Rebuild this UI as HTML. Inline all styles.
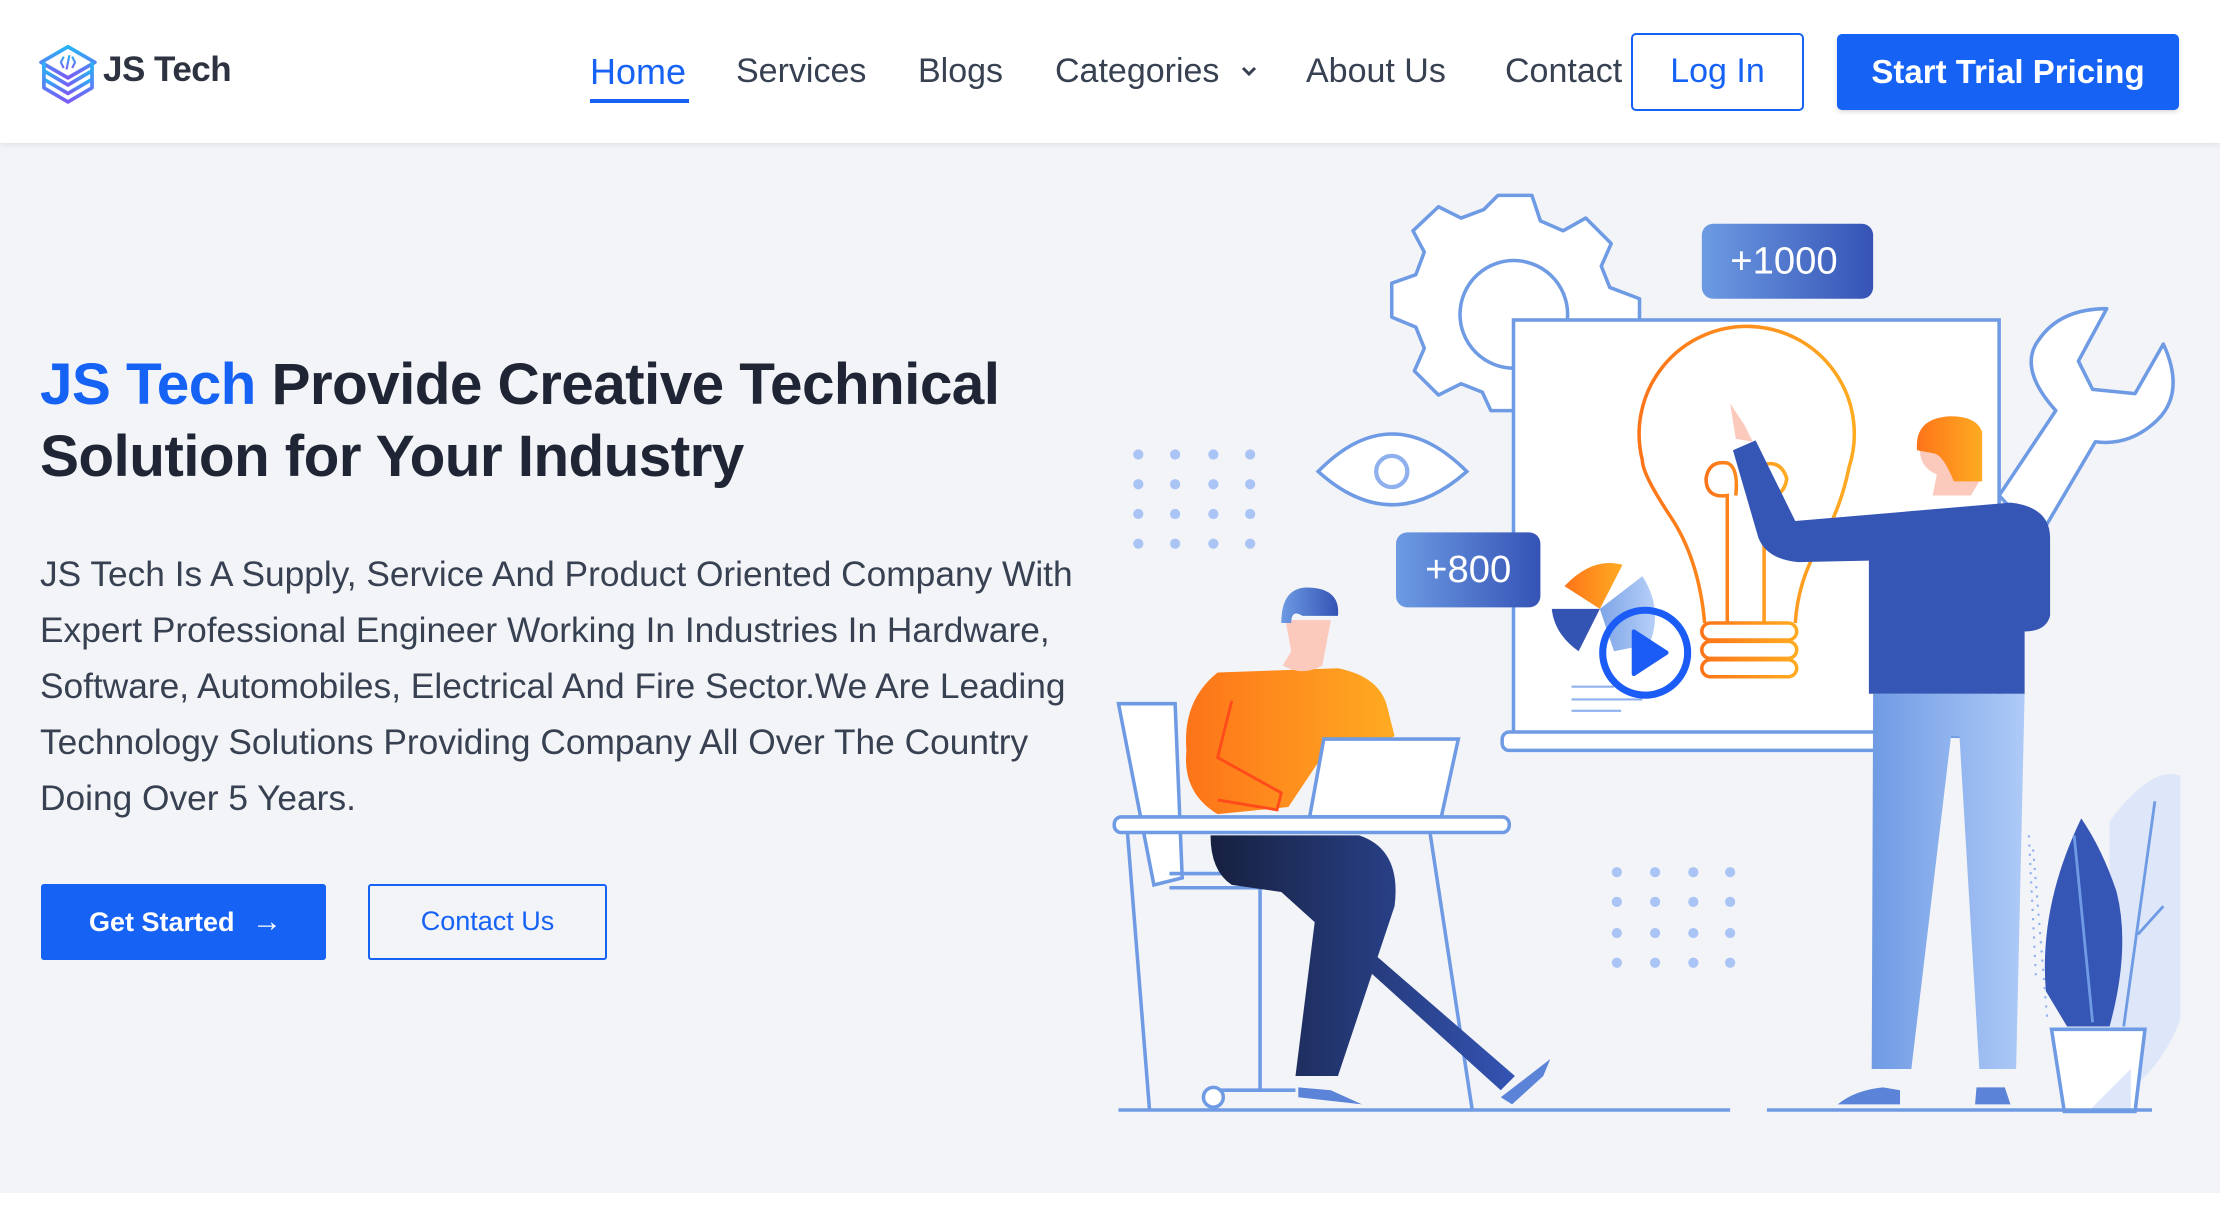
<!DOCTYPE html>
<html><head><meta charset="utf-8"><style>
*{margin:0;padding:0;box-sizing:border-box}
html,body{width:2220px;height:1210px;overflow:hidden;background:#fff;font-family:"Liberation Sans",sans-serif}
.hero{position:absolute;left:0;top:143px;width:2220px;height:1050px;background:#f3f4f8}
.hdr{position:absolute;left:0;top:0;width:2220px;height:143px;background:#fff;box-shadow:0 2px 6px rgba(0,0,0,.08)}
.abs{position:absolute;white-space:nowrap}
.nav{font-size:34px;color:#374151;top:52px}
svg.ill{position:absolute;left:0;top:0;width:2220px;height:1210px}
</style></head><body>
<div class="hero"></div>
<div class="hdr"></div>
<svg class="ill" viewBox="0 0 1568 854.6" xmlns="http://www.w3.org/2000/svg">
<defs>
<linearGradient id="bx" x1="0" x2="1"><stop offset="0" stop-color="#6d9be3"/><stop offset="1" stop-color="#3553b5"/></linearGradient>
<linearGradient id="or" x1="0" x2="1"><stop offset="0" stop-color="#fd7419"/><stop offset="1" stop-color="#ffab22"/></linearGradient>
<linearGradient id="lg" x1="0" x2="1"><stop offset="0" stop-color="#6f9be4"/><stop offset="1" stop-color="#aecaf7"/></linearGradient>
<linearGradient id="dk" x1="0" x2="1"><stop offset="0" stop-color="#16203f"/><stop offset="1" stop-color="#3454b3"/></linearGradient>
<linearGradient id="lo" x1="0" y1="0" x2="0" y2="1"><stop offset="0" stop-color="#25b5f5"/><stop offset="1" stop-color="#7a5cf5"/></linearGradient>
</defs>
<g fill="none" stroke="url(#lo)" stroke-width="2.6" stroke-linejoin="round">
<path d="M48 33 L67 44 L48 55 L29 44 Z"/>
<path d="M31 50 L48 60 L65 50"/><path d="M31 56 L48 66 L65 56"/><path d="M31 44 L31 62 L48 72 L65 62 L65 44"/>
<path d="M45 40 l-2 4 l2 4 M51 40 l2 4 l-2 4 M49 39 l-2 10" stroke-width="1.5"/>
</g>
<path d="M1058 138 L1082 138 L1088 156 L1104 163 L1120 154 L1138 172 L1131 188 L1137 203 L1158 211 L1158 232 L1070 232 L1070 290 L1053 290 L1047 277 L1032 271 L1016 279 L999 262 L1006 246 L1000 231 L983 224 L983 200 L1000 194 L1006 178 L998 163 L1016 146 L1032 154 L1048 148 Z" fill="#fff" stroke="#6f9be4" stroke-width="2.5" stroke-linejoin="round"/>
<path d="M1070 260 A38 38 0 1 1 1107 226" fill="none" stroke="#6f9be4" stroke-width="2.5"/>
<path d="M1412 350 L1452 290 Q1425 260 1440 240 Q1455 218 1488 218 L1468 255 L1478 275 L1508 278 L1528 243 Q1545 280 1520 300 Q1502 315 1480 312 L1440 380 Z" fill="#fff" stroke="#6f9be4" stroke-width="2.5" stroke-linejoin="round"/>
<rect x="1069" y="226" width="343" height="294" fill="#fff" stroke="#6f9be4" stroke-width="2.5"/>
<rect x="1061" y="517" width="270" height="13" rx="5" fill="#fff" stroke="#6f9be4" stroke-width="2.5"/>
<path d="M1204 440 Q1200 395 1180 365 Q1160 335 1160 325 A76 76 0 1 1 1306 330 Q1300 360 1285 385 Q1270 410 1268 440" fill="none" stroke="url(#or)" stroke-width="2.5"/>
<path d="M1220 440 L1220 350 Q1205 352 1205 338 Q1207 325 1220 327 Q1228 330 1226 350 M1246 440 L1246 350 Q1260 352 1262 338 Q1258 325 1246 328 Q1240 332 1246 350" fill="none" stroke="url(#or)" stroke-width="2.5"/>
<g fill="#fff" stroke="url(#or)" stroke-width="2.5"><rect x="1202" y="440" width="67" height="12" rx="6"/><rect x="1202" y="453" width="67" height="12" rx="6"/><rect x="1202" y="466" width="67" height="12" rx="6"/></g>
<path d="M1105 414 Q1125 393 1146 399 L1130 430 Z" fill="url(#or)"/>
<path d="M1096 430 L1130 430 L1115 460 Q1098 448 1096 430 Z" fill="#3454b3"/>
<path d="M1130 430 L1160 407 Q1175 430 1165 455 L1140 460 Z" fill="url(#lg)" opacity=".9"/>
<path d="M1110 485 h30 M1110 494 h50 M1110 502 h35" stroke="#8fb0ee" stroke-width="1.5"/>
<circle cx="1162" cy="461" r="30" fill="none" stroke="#1a5cf5" stroke-width="5"/>
<path d="M1154 446 L1177 461 L1154 476 Z" fill="#1a5cf5" stroke="#1a5cf5" stroke-width="3" stroke-linejoin="round"/>
<rect x="1202" y="158" width="121" height="53" rx="8" fill="url(#bx)"/>
<text x="1260" y="193" font-size="27" fill="#fff" text-anchor="middle" font-family="Liberation Sans">+1000</text>
<rect x="986" y="376" width="102" height="53" rx="8" fill="url(#bx)"/>
<text x="1037" y="411" font-size="27" fill="#fff" text-anchor="middle" font-family="Liberation Sans">+800</text>
<path d="M931 333 Q983 280 1036 333 Q983 380 931 333 Z" fill="#fff" stroke="#6f9be4" stroke-width="2.5"/>
<circle cx="983" cy="333" r="11" fill="none" stroke="#8fb0ee" stroke-width="3"/>
<g fill="#a9c4f5">
<circle cx="804" cy="321" r="3.6"/><circle cx="830" cy="321" r="3.6"/><circle cx="857" cy="321" r="3.6"/><circle cx="883" cy="321" r="3.6"/>
<circle cx="804" cy="342" r="3.6"/><circle cx="830" cy="342" r="3.6"/><circle cx="857" cy="342" r="3.6"/><circle cx="883" cy="342" r="3.6"/>
<circle cx="804" cy="363" r="3.6"/><circle cx="830" cy="363" r="3.6"/><circle cx="857" cy="363" r="3.6"/><circle cx="883" cy="363" r="3.6"/>
<circle cx="804" cy="384" r="3.6"/><circle cx="830" cy="384" r="3.6"/><circle cx="857" cy="384" r="3.6"/><circle cx="883" cy="384" r="3.6"/>
<circle cx="1142" cy="616" r="3.6"/><circle cx="1169" cy="616" r="3.6"/><circle cx="1196" cy="616" r="3.6"/><circle cx="1222" cy="616" r="3.6"/>
<circle cx="1142" cy="637" r="3.6"/><circle cx="1169" cy="637" r="3.6"/><circle cx="1196" cy="637" r="3.6"/><circle cx="1222" cy="637" r="3.6"/>
<circle cx="1142" cy="659" r="3.6"/><circle cx="1169" cy="659" r="3.6"/><circle cx="1196" cy="659" r="3.6"/><circle cx="1222" cy="659" r="3.6"/>
<circle cx="1142" cy="680" r="3.6"/><circle cx="1169" cy="680" r="3.6"/><circle cx="1196" cy="680" r="3.6"/><circle cx="1222" cy="680" r="3.6"/>
</g>
<path d="M1323 490 L1430 490 L1424 755 L1398 755 L1384 520 L1378 520 L1350 755 L1322 755 Z" fill="url(#lg)"/>
<path d="M1298 780 Q1310 770 1330 768 L1342 770 L1342 780 Z M1395 780 L1396 768 L1416 768 L1420 780 Z" fill="#5b84d8"/>
<path d="M1320 490 L1320 396 L1270 397 Q1248 395 1242 380 L1224 318 L1240 311 L1268 368 L1420 355 Q1448 358 1448 380 L1448 435 Q1445 446 1430 446 L1430 490 Z" fill="#3556b5"/>
<path d="M1226 310 L1222 285 L1232 300 L1238 312 Z" fill="#fcc9bd"/>
<path d="M1365 350 L1368 335 Q1355 330 1356 315 L1398 310 L1398 340 L1392 350 Z" fill="#fcc9bd"/>
<path d="M1354 318 Q1352 295 1378 294 Q1396 294 1400 305 L1400 340 L1380 340 Q1372 320 1365 320 Z" fill="url(#or)"/>
<path d="M790 497 L830 497 L835 620 L815 625 Z" fill="#fff" stroke="#6f9be4" stroke-width="2.5"/>
<path d="M796 584 L812 785 M1010 588 L1040 785 M890 627 L890 770 M826 617 L935 617 L935 627 L826 627" fill="none" stroke="#6f9be4" stroke-width="2.5"/>
<path d="M852 770 L915 770" stroke="#6f9be4" stroke-width="2.5"/><circle cx="857" cy="775" r="7" fill="#fff" stroke="#6f9be4" stroke-width="2.5"/>
<path d="M838 530 Q835 495 860 475 L945 472 Q975 478 980 500 L985 520 L930 540 L910 570 L860 575 Q835 560 838 530 Z" fill="url(#or)"/>
<path d="M870 495 L860 535 L905 560 L902 572 L860 565" fill="none" stroke="#ff4a1a" stroke-width="2"/>
<path d="M908 438 L912 460 L906 470 Q920 478 934 470 L940 438 Z" fill="#fcc9bd"/>
<path d="M905 440 Q905 414 925 415 Q947 416 945 435 L920 435 Q912 430 912 440 Z" fill="url(#bx)"/>
<path d="M855 590 L960 590 Q990 600 985 640 L945 760 L915 760 L930 640 L920 630 L1070 760 L1060 770 L905 630 L870 625 Q855 615 855 590 Z" fill="url(#dk)"/>
<path d="M917 775 L917 768 L940 770 L962 780 Z M1060 775 L1095 748 L1090 760 L1068 780 Z" fill="#5b84d8"/>
<path d="M935 522 L1030 522 L1018 577 L925 577 Z" fill="#fff" stroke="#6f9be4" stroke-width="2.5"/>
<rect x="787" y="577" width="279" height="11" rx="5" fill="#fff" stroke="#6f9be4" stroke-width="2.5"/>
<path d="M1490 580 Q1520 540 1540 548 L1540 720 Q1525 760 1490 780 Z" fill="#dde7f9"/>
<path d="M1470 578 Q1440 640 1445 700 L1460 725 L1490 725 Q1505 670 1495 630 Q1485 600 1470 578 Z" fill="#3556b5"/>
<path d="M1465 590 L1478 722 M1500 725 L1522 566 M1510 660 L1528 640" stroke="#6f9be4" stroke-width="2" fill="none"/>
<path d="M1449 727 L1515 727 L1508 785 L1458 785 Z" fill="#fff" stroke="#6f9be4" stroke-width="2.5"/>
<path d="M1505 755 L1475 785 L1505 785 Z" fill="#dde7f9"/>
<path d="M1433 590 L1438 690 M1436 600 L1446 720" stroke="#8fb0ee" stroke-width="1.5" stroke-dasharray="1.5 5"/>
<path d="M790 784 L1222 784 M1248 784 L1520 784" stroke="#6f9be4" stroke-width="2.5"/>
</svg>

<div class="abs" style="left:103px;top:50px;font-size:35px;font-weight:bold;color:#2d3340;letter-spacing:-0.5px">JS Tech</div>
<div class="abs nav" style="left:590px;color:#1662f5;font-size:36px;top:51px">Home</div>
<div class="abs" style="left:590px;top:99px;width:99px;height:4px;background:#1662f5"></div>
<div class="abs nav" style="left:736px">Services</div>
<div class="abs nav" style="left:918px">Blogs</div>
<div class="abs nav" style="left:1055px">Categories</div>
<svg class="abs" style="left:1240px;top:64px" width="18" height="14" viewBox="0 0 18 14"><path d="M3 4 L9 10 L15 4" fill="none" stroke="#374151" stroke-width="3"/></svg>
<div class="abs nav" style="left:1306px">About Us</div>
<div class="abs nav" style="left:1505px">Contact</div>
<div class="abs" style="left:1631px;top:33px;width:173px;height:78px;border:2.5px solid #1662f5;border-radius:5px;color:#1662f5;font-size:34px;line-height:73px;text-align:center">Log In</div>
<div class="abs" style="left:1837px;top:34px;width:342px;height:76px;background:#1662f5;border-radius:5px;color:#fff;font-size:33px;font-weight:bold;line-height:76px;text-align:center;box-shadow:0 2px 4px rgba(0,0,0,.15)">Start Trial Pricing</div>

<div class="abs" style="left:40px;top:349px;font-size:58.5px;font-weight:bold;color:#1f2535;line-height:72px;letter-spacing:-0.6px"><span style="color:#1662f5">JS Tech</span> Provide Creative Technical<br>Solution for Your Industry</div>
<div class="abs" style="left:40px;top:547px;font-size:35.3px;color:#374151;line-height:56px">JS Tech Is A Supply, Service And Product Oriented Company With<br>Expert Professional Engineer Working In Industries In Hardware,<br>Software, Automobiles, Electrical And Fire Sector.We Are Leading<br>Technology Solutions Providing Company All Over The Country<br>Doing Over 5 Years.</div>
<div class="abs" style="left:41px;top:884px;width:285px;height:76px;background:#1662f5;border-radius:3px;color:#fff;font-size:27px;font-weight:bold;line-height:76px;padding-left:48px">Get Started <span style="font-size:30px;margin-left:10px">&#8594;</span></div>
<div class="abs" style="left:368px;top:884px;width:239px;height:76px;border:2.5px solid #1662f5;border-radius:3px;color:#1662f5;font-size:27px;line-height:71px;text-align:center">Contact Us</div>
</body></html>
